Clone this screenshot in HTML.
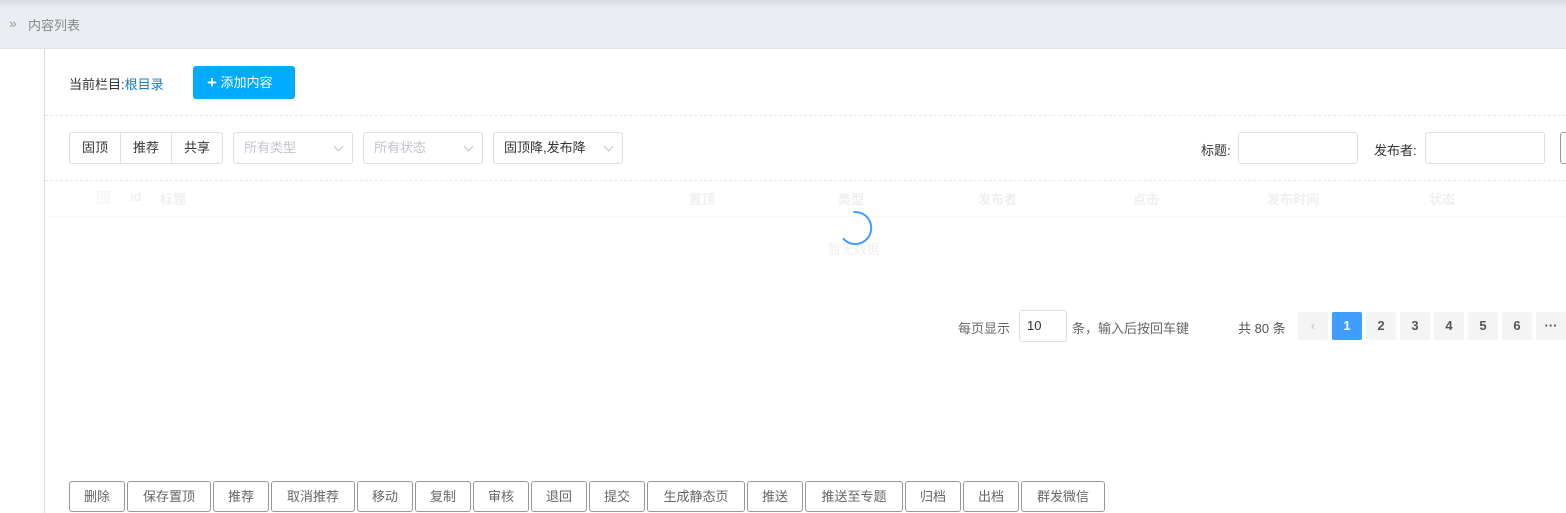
<!DOCTYPE html>
<html><head><meta charset="utf-8"><style>
*{box-sizing:border-box;margin:0;padding:0}
body{width:1566px;height:513px;overflow:hidden;background:#fff;font-family:"Liberation Sans","Noto Sans CJK SC",sans-serif;font-size:13px;color:#333;position:relative}
.a{position:absolute}
.hdr{left:0;top:0;width:1566px;height:49px;background:#eaedf1;border-bottom:1px solid #e0e4ea}
.hdr:before{content:"";position:absolute;left:0;top:0;right:0;height:8px;background:linear-gradient(#d9dce1,#eaedf1)}
.vl{left:44px;top:49px;width:1px;height:464px;background:#d3dde6}
.box{border:1px solid #dcdfe6;border-radius:3px;background:#fff}
.dash{height:0;border-top:1px dashed #e4e8ee}
.btn{border:1px solid #999;border-radius:3px;height:31px;top:481px;text-align:center;line-height:29px;color:#666;font-size:13px}
.pg{top:312px;width:30px;height:28px;background:#f4f4f5;border-radius:2px;text-align:center;line-height:28px;font-weight:bold;font-size:13px;color:#555}
.th{top:189px;color:#eeeff1;font-size:13px;font-weight:bold}
.sel{color:#c0c4cc}
.chev{position:absolute;right:10px;top:10px;width:7px;height:7px;border-right:1px solid #c0c4cc;border-bottom:1px solid #c0c4cc;transform:rotate(45deg)}
</style></head><body>
<div class="a hdr"></div>
<div class="a" style="left:9px;top:15px;color:#999;font-size:14px">»</div>
<div class="a" style="left:28px;top:15px;color:#888;font-size:13px">内容列表</div>
<div class="a vl"></div>

<div class="a" style="left:69px;top:74px">当前栏目:<span style="color:#1f78c0">根目录</span></div>
<div class="a" style="left:193px;top:66px;width:102px;height:33px;background:#00aaff;border-radius:3px;color:#fff;line-height:33px;padding-left:14px;font-size:13px"><span style="font-size:17px;font-weight:bold;vertical-align:-1px">+</span> 添加内容</div>
<div class="a dash" style="left:45px;top:115px;width:1521px"></div>

<div class="a box" style="left:69px;top:132px;width:154px;height:32px;display:flex">
<div style="width:51px;text-align:center;line-height:30px;border-right:1px solid #dcdfe6">固顶</div>
<div style="width:51px;text-align:center;line-height:30px;border-right:1px solid #dcdfe6">推荐</div>
<div style="width:50px;text-align:center;line-height:30px">共享</div></div>
<div class="a box sel" style="left:233px;top:132px;width:120px;height:32px;line-height:30px;padding-left:10px">所有类型<i class="chev"></i></div>
<div class="a box sel" style="left:363px;top:132px;width:120px;height:32px;line-height:30px;padding-left:10px">所有状态<i class="chev"></i></div>
<div class="a box" style="left:493px;top:132px;width:130px;height:32px;line-height:30px;padding-left:10px">固顶降,发布降<i class="chev"></i></div>

<div class="a" style="left:1201px;top:140px">标题:</div>
<div class="a box" style="left:1238px;top:132px;width:120px;height:32px"></div>
<div class="a" style="left:1374px;top:140px">发布者:</div>
<div class="a box" style="left:1425px;top:132px;width:120px;height:32px"></div>
<div class="a box" style="left:1560px;top:132px;width:20px;height:32px;border-color:#999"></div>

<div class="a dash" style="left:45px;top:180px;width:1521px"></div>
<div class="a" style="left:97px;top:191px;width:13px;height:13px;border:1px solid #f2f4f7;background:#fafbfc"></div>
<div class="a th" style="left:130px">id</div>
<div class="a th" style="left:160px">标题</div>
<div class="a th" style="left:689px">置顶</div>
<div class="a th" style="left:838px">类型</div>
<div class="a th" style="left:978px">发布者</div>
<div class="a th" style="left:1133px">点击</div>
<div class="a th" style="left:1267px">发布时间</div>
<div class="a th" style="left:1429px">状态</div>
<div class="a" style="left:45px;top:216px;width:1521px;height:1px;background:#f8f9fa"></div>
<div class="a" style="left:828px;top:239px;color:#eeeff1;font-size:13px">暂无数据</div>
<svg class="a" style="left:835px;top:208px" width="40" height="40" viewBox="0 0 40 40"><path d="M18.5 4.1 A16 16 0 1 1 8 30.3" fill="none" stroke="#409eff" stroke-width="2"/></svg>

<div class="a" style="left:958px;top:318px;color:#666">每页显示</div>
<div class="a box" style="left:1019px;top:310px;width:48px;height:32px;line-height:30px;padding-left:7px">10</div>
<div class="a" style="left:1072px;top:318px;color:#666">条，输入后按回车键</div>
<div class="a" style="left:1238px;top:318px;color:#555">共 80 条</div>
<div class="a pg" style="left:1298px;color:#c0c4cc;font-weight:normal">‹</div>
<div class="a pg" style="left:1332px;background:#409eff;color:#fff">1</div>
<div class="a pg" style="left:1366px">2</div>
<div class="a pg" style="left:1400px">3</div>
<div class="a pg" style="left:1434px">4</div>
<div class="a pg" style="left:1468px">5</div>
<div class="a pg" style="left:1502px">6</div>
<div class="a pg" style="left:1536px">···</div>

<div class="a btn" style="left:69px;width:56px">删除</div>
<div class="a btn" style="left:127px;width:84px">保存置顶</div>
<div class="a btn" style="left:213px;width:56px">推荐</div>
<div class="a btn" style="left:271px;width:84px">取消推荐</div>
<div class="a btn" style="left:357px;width:56px">移动</div>
<div class="a btn" style="left:415px;width:56px">复制</div>
<div class="a btn" style="left:473px;width:56px">审核</div>
<div class="a btn" style="left:531px;width:56px">退回</div>
<div class="a btn" style="left:589px;width:56px">提交</div>
<div class="a btn" style="left:647px;width:98px">生成静态页</div>
<div class="a btn" style="left:747px;width:56px">推送</div>
<div class="a btn" style="left:805px;width:98px">推送至专题</div>
<div class="a btn" style="left:905px;width:56px">归档</div>
<div class="a btn" style="left:963px;width:56px">出档</div>
<div class="a btn" style="left:1021px;width:84px">群发微信</div>
</body></html>
